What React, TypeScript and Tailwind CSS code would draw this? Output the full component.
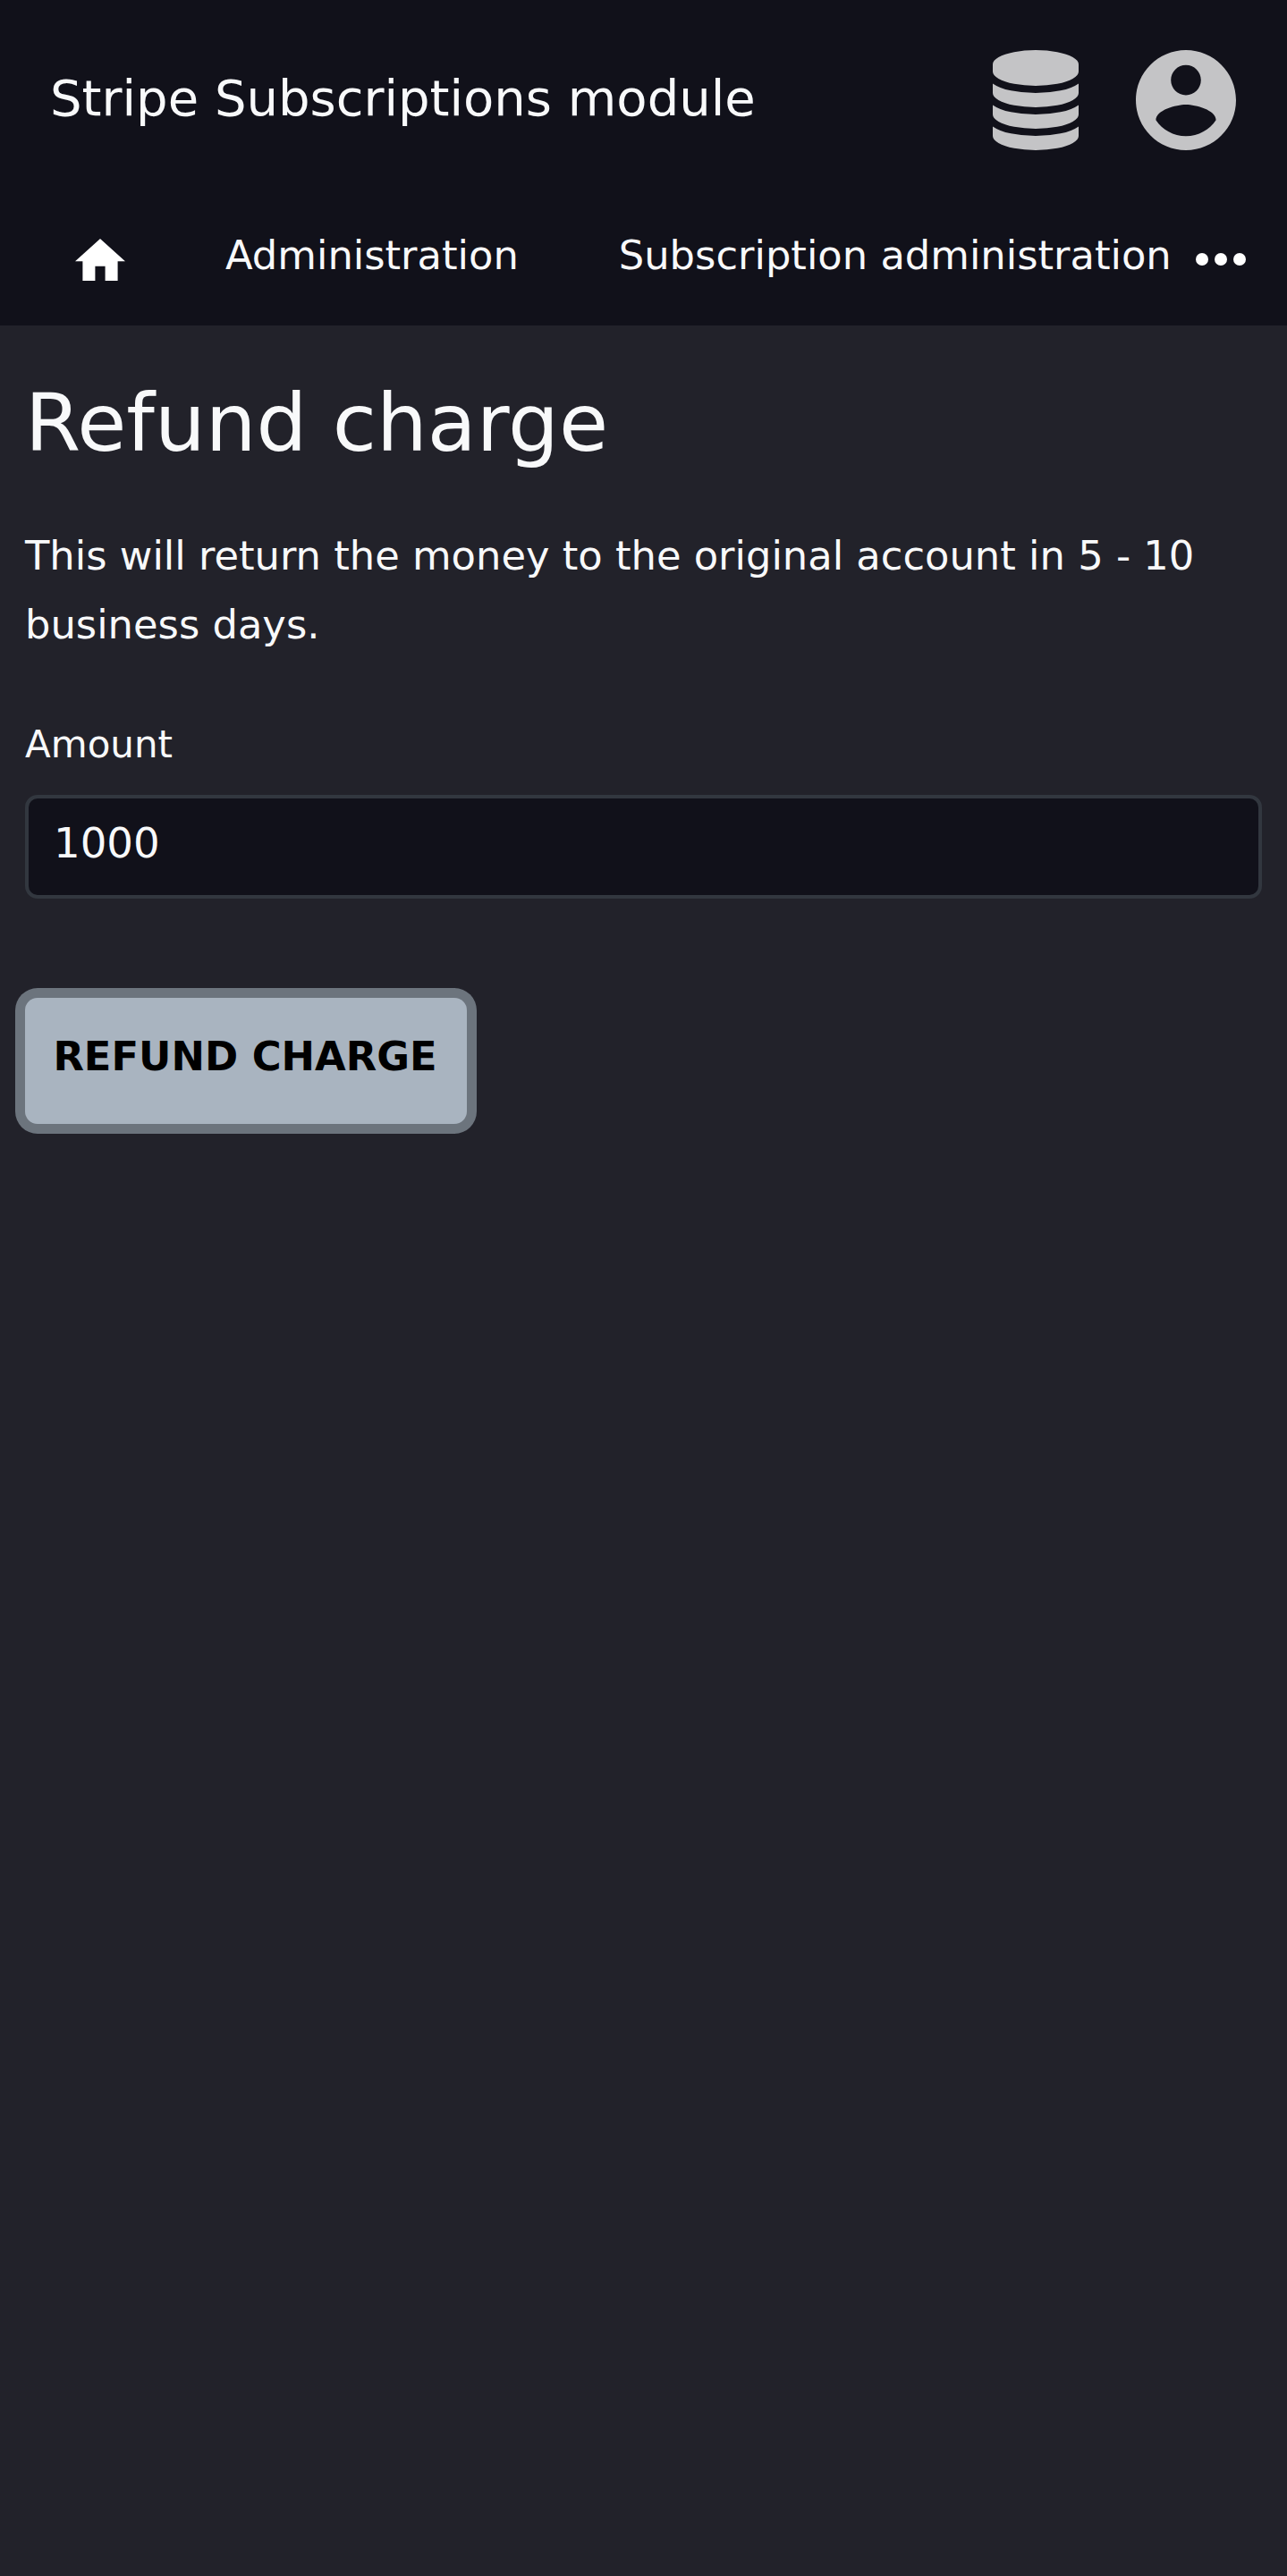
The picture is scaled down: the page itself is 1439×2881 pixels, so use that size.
export default function App() {
  return (
    <div className="min-h-[2881px] w-full bg-[#22222a] text-[#f8f9fa] font-['DejaVu_Sans',sans-serif]">
      <header className="h-[364px] bg-[#11111a]">
        <div className="flex h-[224px] items-center justify-between pr-[57px] pl-14">
          <span className="pb-[5px] text-[56px] leading-[84px] whitespace-nowrap">Stripe Subscriptions module</span>
          <div className="flex items-center gap-16">
            <svg className="h-28 w-24" viewBox="0 0 1536 1792" fill="#c4c4c6">
              <path d="M768 768q237 0 443-43t325-127v170q0 69-103 128t-280 93.5-385 34.5-385-34.5-280-93.5-103-128v-170q119 84 325 127t443 43zm0 768q237 0 443-43t325-127v170q0 69-103 128t-280 93.5-385 34.5-385-34.5-280-93.5-103-128v-170q119 84 325 127t443 43zm0-384q237 0 443-43t325-127v170q0 69-103 128t-280 93.5-385 34.5-385-34.5-280-93.5-103-128v-170q119 84 325 127t443 43zm0-1152q208 0 385 34.5t280 93.5 103 128v128q0 69-103 128t-280 93.5-385 34.5-385-34.5-280-93.5-103-128v-128q0-69 103-128t280-93.5 385-34.5z" />
            </svg>
            <svg className="h-28 w-28" viewBox="2 2 20 20" fill="#c4c4c6">
              <path d="M12 2C6.48 2 2 6.48 2 12s4.48 10 10 10 10-4.48 10-10S17.52 2 12 2zm0 3c1.66 0 3 1.34 3 3s-1.34 3-3 3-3-1.34-3-3 1.34-3 3-3zm0 14.2c-2.5 0-4.71-1.28-6-3.22.03-1.99 4-3.08 6-3.08 1.99 0 5.97 1.09 6 3.08-1.29 1.94-3.5 3.22-6 3.22z" />
            </svg>
          </div>
        </div>
        <nav className="flex h-[122px] items-center pl-[84px] text-[44.8px] leading-[77px] whitespace-nowrap">
          <svg className="mt-[11px] h-[47.6px] w-14" viewBox="2 3 20 17" fill="#fff">
            <path d="M10 20v-6h4v6h5v-8h3L12 3 2 12h3v8z" />
          </svg>
          <span className="ml-28">Administration</span>
          <span className="ml-28">Subscription administration</span>
          <svg className="mt-[10px] ml-[27px] h-[14px] w-14 shrink-0" viewBox="0 0 16 4" fill="#fff">
            <circle cx="2" cy="2" r="2" />
            <circle cx="8" cy="2" r="2" />
            <circle cx="14" cy="2" r="2" />
          </svg>
        </nav>
      </header>
      <main className="pt-[53px] pr-[28.5px] pl-7">
        <h1 className="text-[89.6px] leading-[112px]">Refund charge</h1>
        <p className="mt-[54px] text-[44.8px] leading-[77px]">
          This will return the money to the original account in 5 - 10 business days.
        </p>
        <label className="mt-[61px] block text-[42px] leading-[70px]" htmlFor="amount">Amount</label>
        <input
          id="amount"
          className="mt-[21px] block h-[116px] w-full rounded-[14px] border-4 border-[#32373f] bg-[#11111a] px-[28px] pb-[9px] text-[46.67px]"
          defaultValue="1000"
        />
        <button className="mt-[111px] block h-[141px] w-[494px] rounded-[14px] bg-[#a9b4c0] pr-[2px] pb-[9px] text-[44.8px] font-bold text-black ring-[11px] ring-[#6c747d]">
          REFUND CHARGE
        </button>
      </main>
    </div>
  );
}
